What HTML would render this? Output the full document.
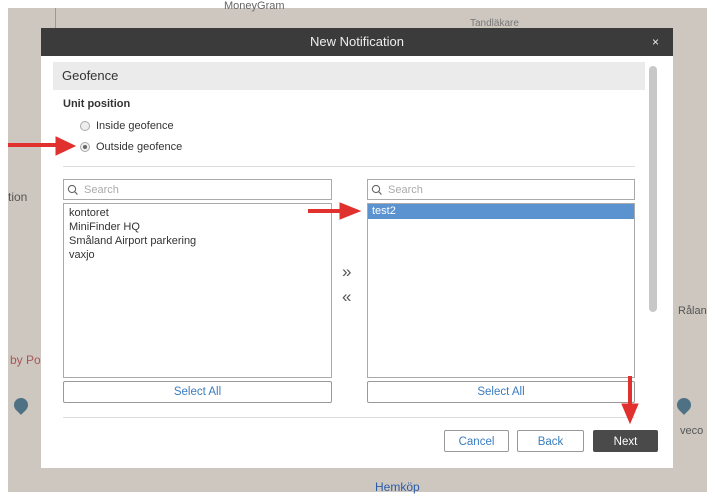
<!DOCTYPE html>
<html><head><meta charset="utf-8"><style>
*{margin:0;padding:0;box-sizing:border-box}
body{width:715px;height:500px;background:#fff;position:relative;overflow:hidden;font-family:"Liberation Sans",sans-serif;font-size:11px;color:#333}
.map{position:absolute;left:8px;top:8px;width:699px;height:484px;background:#cdc7c0}
.a{position:absolute}
.dlg{position:absolute;left:41px;top:28px;width:632px;height:440px;background:#fff}
.hdr{position:absolute;left:41px;top:28px;width:632px;height:28px;background:#3b3b3b;color:#eee;font-size:13px;text-align:center;line-height:28px}
.box{position:absolute;border:1px solid #aaa;background:#fff}
.btn{position:absolute;border:1px solid #999;border-radius:2px;background:#fff;color:#3a7cc0;text-align:center;font-size:11.5px}
.radio{position:absolute;width:10px;height:10px;border-radius:50%;border:1px solid #aaa;background:#eee}
</style></head><body>
<div class="map"></div>
<div class="a" style="left:55px;top:8px;width:1px;height:20px;background:#999"></div>
<div class="a" style="left:224px;top:0;color:#666;font-size:11px">MoneyGram</div>
<div class="a" style="left:470px;top:18px;color:#777;font-size:10px">Tandläkare</div>
<div class="a" style="left:8px;top:190px;color:#555;font-size:12px">tion</div>
<div class="a" style="left:10px;top:353px;color:#a55;font-size:12px">by Po</div>
<div class="a" style="left:678px;top:305px;color:#555;font-size:11px">Rålan</div>
<div class="a" style="left:680px;top:425px;color:#555;font-size:11px">veco</div>
<div class="a" style="left:375px;top:480px;color:#2a5ca8;font-size:12px">Hemköp</div>
<div class="a" style="left:14px;top:398px;width:14px;height:14px;border-radius:50% 50% 50% 0;transform:rotate(-45deg);background:#4f7184"></div>
<div class="a" style="left:677px;top:398px;width:14px;height:14px;border-radius:50% 50% 50% 0;transform:rotate(-45deg);background:#4f7184"></div>
<div class="dlg"></div>
<div class="hdr">New Notification<span style="position:absolute;right:14px;font-size:12px">×</span></div>
<div class="a" style="left:53px;top:62px;width:592px;height:28px;background:#ebebeb;font-size:13px;line-height:28px;padding-left:9px;color:#333">Geofence</div>
<div class="a" style="left:649px;top:66px;width:8px;height:246px;border-radius:4px;background:#c8c8c8"></div>
<div class="a" style="left:63px;top:98px;font-weight:bold;font-size:11px">Unit position</div>
<div class="radio" style="left:80px;top:121px"></div>
<div class="a" style="left:96px;top:120px">Inside geofence</div>
<div class="radio" style="left:80px;top:142px"><div style="position:absolute;left:2px;top:2px;width:4px;height:4px;border-radius:50%;background:#666"></div></div>
<div class="a" style="left:96px;top:141px">Outside geofence</div>
<div class="a" style="left:63px;top:166px;width:572px;height:1px;background:#ddd"></div>
<div class="box" style="left:63px;top:179px;width:269px;height:21px;color:#aaa;padding:4px 0 0 20px">Search</div>
<div class="box" style="left:367px;top:179px;width:268px;height:21px;color:#aaa;padding:4px 0 0 20px">Search</div>
<svg class="a" style="left:67px;top:184px" width="12" height="12"><circle cx="5" cy="5" r="3.6" fill="none" stroke="#666" stroke-width="1.1"/><path d="M7.6 7.6L10.5 10.5" stroke="#666" stroke-width="1.2"/></svg>
<svg class="a" style="left:371px;top:184px" width="12" height="12"><circle cx="5" cy="5" r="3.6" fill="none" stroke="#666" stroke-width="1.1"/><path d="M7.6 7.6L10.5 10.5" stroke="#666" stroke-width="1.2"/></svg>
<div class="box" style="left:63px;top:203px;width:269px;height:175px;padding:2px 5px;line-height:14px">kontoret<br>MiniFinder HQ<br>Småland Airport parkering<br>vaxjo</div>
<div class="box" style="left:367px;top:203px;width:268px;height:175px"><div style="background:#5b93d1;color:#fff;height:15px;line-height:15px;padding-left:4px">test2</div></div>
<div class="a" style="left:342px;top:262px;font-size:17px;color:#555">»</div>
<div class="a" style="left:342px;top:287px;font-size:17px;color:#555">«</div>
<div class="btn" style="left:63px;top:381px;width:269px;height:22px;line-height:21px">Select All</div>
<div class="btn" style="left:367px;top:381px;width:268px;height:22px;line-height:21px">Select All</div>
<div class="a" style="left:63px;top:417px;width:572px;height:1px;background:#ddd"></div>
<div class="btn" style="left:444px;top:430px;width:65px;height:22px;line-height:22px">Cancel</div>
<div class="btn" style="left:517px;top:430px;width:67px;height:22px;line-height:22px">Back</div>
<div class="btn" style="left:593px;top:430px;width:65px;height:22px;line-height:22px;background:#4a4a4a;border-color:#4a4a4a;color:#fff">Next</div>
<svg class="a" style="left:0;top:0" width="715" height="500">
<g fill="#e0312e" stroke="#e0312e">
<path d="M8 145H58" stroke-width="4"/><path d="M56 137L75 146L56 155Z"/>
<path d="M308 211H342" stroke-width="4"/><path d="M340 203L360 211L340 219Z"/>
<path d="M630 376V406" stroke-width="4"/><path d="M622 404L630 423L638 404Z"/>
</g></svg>
</body></html>
